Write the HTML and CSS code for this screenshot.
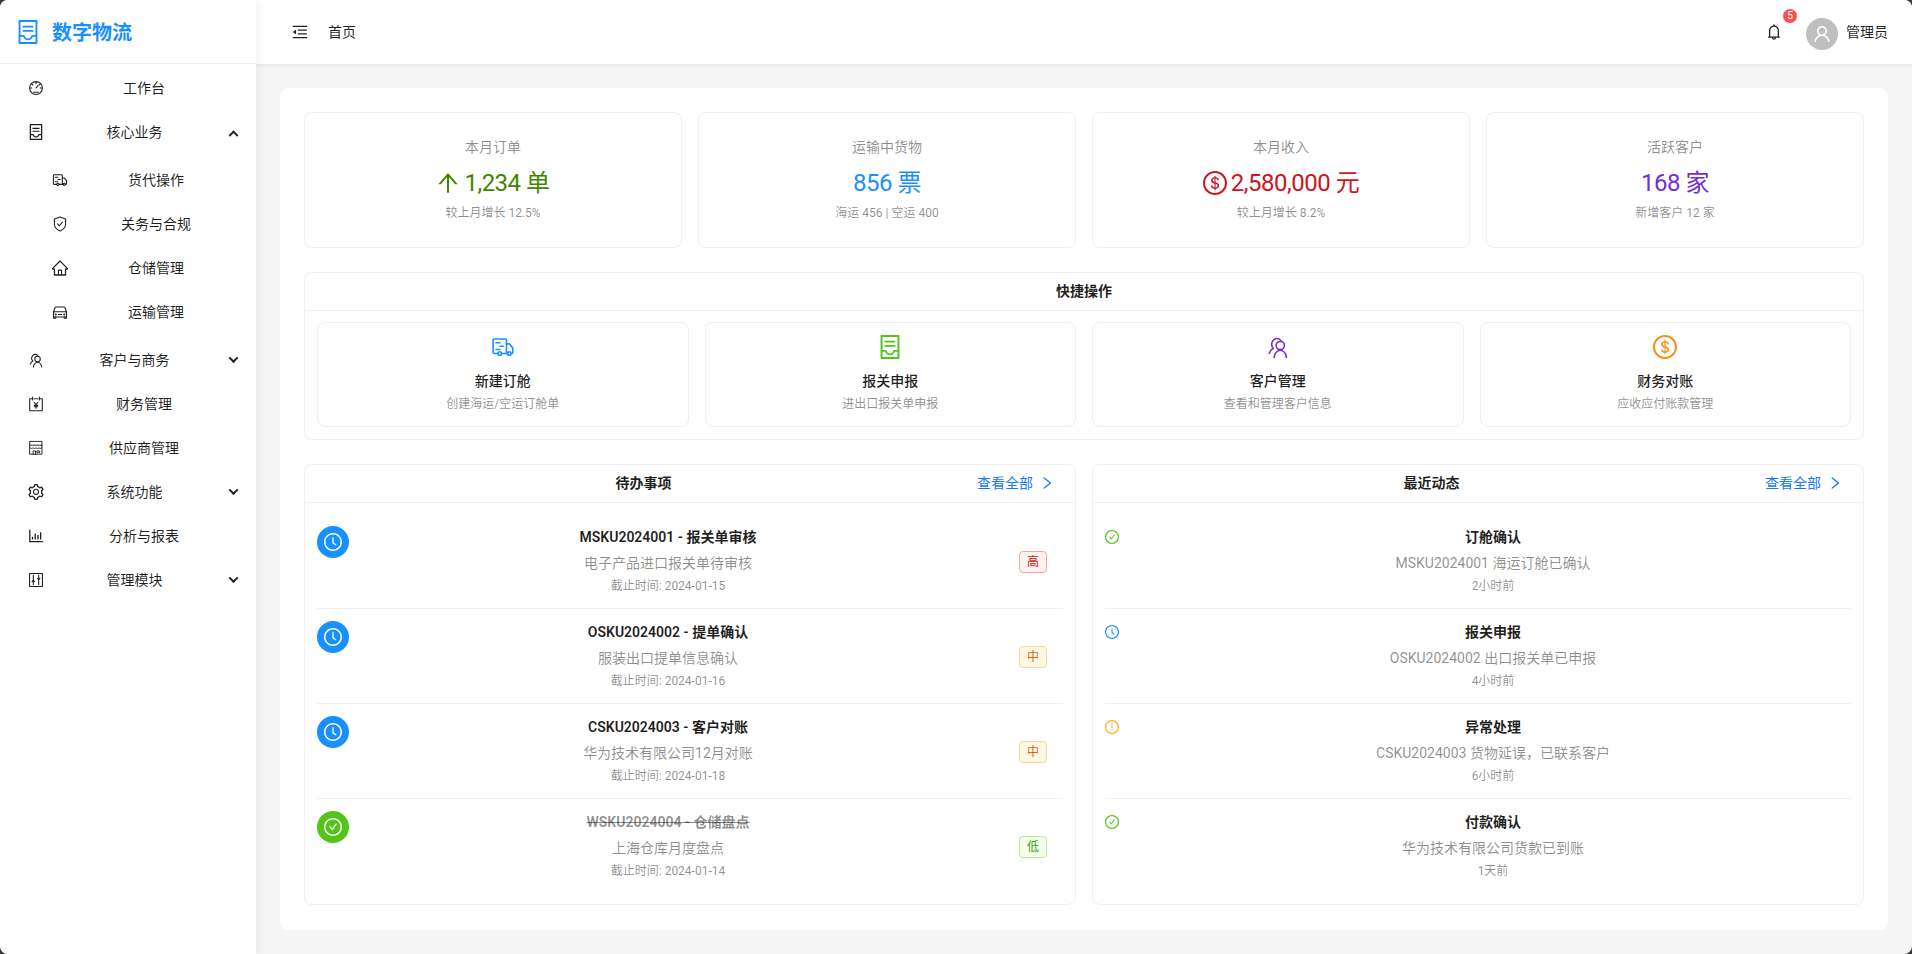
FILE: index.html
```html
<!DOCTYPE html>
<html lang="zh-CN">
<head>
<meta charset="utf-8">
<title>数字物流</title>
<link rel="stylesheet" href="styles.css">
</head>
<body>
<svg class="sprite" xmlns="http://www.w3.org/2000/svg">
  <defs>
    <symbol id="i-fold" viewBox="64 64 896 896"><path d="M408 442h480c4.4 0 8-3.6 8-8v-56c0-4.4-3.6-8-8-8H408c-4.4 0-8 3.6-8 8v56c0 4.4 3.6 8 8 8zm-8 204c0 4.4 3.6 8 8 8h480c4.4 0 8-3.6 8-8v-56c0-4.4-3.6-8-8-8H408c-4.4 0-8 3.6-8 8v56zm504-486H120c-4.4 0-8 3.6-8 8v56c0 4.4 3.6 8 8 8h784c4.4 0 8-3.6 8-8v-56c0-4.4-3.6-8-8-8zm0 632H120c-4.4 0-8 3.6-8 8v56c0 4.4 3.6 8 8 8h784c4.4 0 8-3.6 8-8v-56c0-4.4-3.6-8-8-8zM115.4 518.9L271.7 642c5.8 4.6 14.4.5 14.4-6.9V388.9c0-7.4-8.5-11.5-14.4-6.9L115.4 505.1a8.74 8.74 0 000 13.8z"/></symbol>
    <symbol id="i-clock" viewBox="64 64 896 896"><path d="M512 64C264.6 64 64 264.6 64 512s200.6 448 448 448 448-200.6 448-448S759.4 64 512 64zm0 820c-205.4 0-372-166.6-372-372s166.6-372 372-372 372 166.6 372 372-166.6 372-372 372z"/><path d="M686.7 638.6L544.1 535.5V288c0-4.4-3.6-8-8-8H488c-4.4 0-8 3.6-8 8v275.4c0 2.6 1.2 5 3.3 6.5l165.4 120.6c3.6 2.6 8.6 1.8 11.2-1.7l28.6-39c2.6-3.7 1.8-8.7-1.8-11.2z"/></symbol>
    <symbol id="i-check" viewBox="64 64 896 896"><path d="M699 353h-46.9c-10.2 0-19.9 4.9-25.9 13.3L469 584.3l-71.2-98.8c-6-8.3-15.6-13.3-25.9-13.3H325c-6.5 0-10.3 7.4-6.5 12.7l124.6 172.8a31.8 31.8 0 0051.7 0l210.6-292c3.9-5.3.1-12.7-6.4-12.7z"/><path d="M512 64C264.6 64 64 264.6 64 512s200.6 448 448 448 448-200.6 448-448S759.4 64 512 64zm0 820c-205.4 0-372-166.6-372-372s166.6-372 372-372 372 166.6 372 372-166.6 372-372 372z"/></symbol>
    <symbol id="i-warn" viewBox="64 64 896 896"><path d="M512 64C264.6 64 64 264.6 64 512s200.6 448 448 448 448-200.6 448-448S759.4 64 512 64zm0 820c-205.4 0-372-166.6-372-372s166.6-372 372-372 372 166.6 372 372-166.6 372-372 372z"/><path d="M464 688a48 48 0 1096 0 48 48 0 10-96 0zm24-112h48c4.4 0 8-3.6 8-8V296c0-4.4-3.6-8-8-8h-48c-4.4 0-8 3.6-8 8v272c0 4.4 3.6 8 8 8z"/></symbol>
    <symbol id="i-bell" viewBox="64 64 896 896"><path d="M816 768h-24V428c0-141.1-104.3-257.7-240-277.1V112c0-22.1-17.9-40-40-40s-40 17.9-40 40v38.9c-135.7 19.4-240 136-240 277.1v340h-24c-17.7 0-32 14.3-32 32v32c0 4.4 3.6 8 8 8h216c0 61.8 50.2 112 112 112s112-50.2 112-112h216c4.4 0 8-3.6 8-8v-32c0-17.7-14.3-32-32-32zM512 888c-26.5 0-48-21.5-48-48h96c0 26.5-21.5 48-48 48zM304 768V428c0-55.6 21.6-107.8 60.9-147.1S456.4 220 512 220c55.6 0 107.8 21.6 147.1 60.9S720 372.4 720 428v340H304z"/></symbol>
    <symbol id="i-user" viewBox="64 64 896 896"><path d="M858.5 763.6a374 374 0 00-80.6-119.5 375.63 375.63 0 00-119.5-80.6c-.4-.2-.8-.3-1.2-.5C719.5 518 760 444.7 760 362c0-137-111-248-248-248S264 225 264 362c0 82.7 40.5 156 102.8 201.1-.4.2-.8.3-1.2.5-44.8 18.9-85 46-119.5 80.6a375.63 375.63 0 00-80.6 119.5A371.7 371.7 0 00136 901.8a8 8 0 008 8.2h60c4.4 0 7.9-3.5 8-7.8 2-77.2 33-149.5 87.8-204.3 56.7-56.7 132-87.9 212.2-87.9s155.5 31.2 212.2 87.9C779 752.7 810 825 812 902.2c.1 4.4 3.6 7.8 8 7.8h60a8 8 0 008-8.2c-1-47.8-10.9-94.3-29.5-138.2zM512 534c-45.9 0-89.1-17.9-121.6-50.4S340 407.9 340 362c0-45.9 17.9-89.1 50.4-121.6S466.1 190 512 190s89.1 17.9 121.6 50.4S684 316.1 684 362c0 45.9-17.9 89.1-50.4 121.6S557.9 534 512 534z"/></symbol>
    <symbol id="i-dollar" viewBox="64 64 896 896"><path d="M512 64C264.6 64 64 264.6 64 512s200.6 448 448 448 448-200.6 448-448S759.4 64 512 64zm0 820c-205.4 0-372-166.6-372-372s166.6-372 372-372 372 166.6 372 372-166.6 372-372 372zm47.7-395.2l-25.4-5.9V348.6c38 5.2 61.5 29 65.5 58.2.5 4 3.9 6.9 7.9 6.9h44.9c4.7 0 8.4-4.1 8-8.8-6.1-62.3-57.4-102.3-125.9-109.2V263c0-4.4-3.6-8-8-8h-28.1c-4.4 0-8 3.6-8 8v33c-70.8 6.9-126.2 46-126.2 119 0 67.6 49.8 100.2 102.1 112.7l24.7 6.3v142.7c-44.2-5.9-69-29.5-74.1-61.3-.6-3.8-4-6.6-7.9-6.6H363c-4.7 0-8.4 4-8 8.7 4.5 55 46.2 105.6 135.2 112.1V761c0 4.4 3.6 8 8 8h28.4c4.4 0 8-3.6 8-8.1l-.2-31.7c78.3-6.9 134.3-48.8 134.3-124-.1-69.4-44.2-100.4-109-116.4zm-68.6-16.2c-5.6-1.6-10.3-3.1-15-5-33.8-12.2-49.5-31.9-49.5-57.3 0-36.3 27.5-57 64.5-61.7v124zM534.3 677V543.3c3.1.9 5.9 1.6 8.8 2.2 47.3 14.4 63.2 34.4 63.2 65.1 0 39.1-29.4 62.6-72 66.4z"/></symbol>
    <symbol id="i-arrowup" viewBox="64 64 896 896"><path d="M868 545.5L536.1 163a31.96 31.96 0 00-48.3 0L156 545.5a7.97 7.97 0 006 13.2h81c4.6 0 9-2 12.1-5.5L474 300.9V864c0 4.4 3.6 8 8 8h60c4.4 0 8-3.6 8-8V300.9l218.9 252.3c3 3.5 7.4 5.5 12.1 5.5h81c6.8 0 10.5-8 6-13.2z"/></symbol>
    <symbol id="i-right" viewBox="64 64 896 896"><path d="M765.7 486.8L314.9 134.7A7.97 7.97 0 00302 141v77.3c0 4.9 2.3 9.6 6.1 12.6l360 281.1-360 281.1c-3.9 3-6.1 7.7-6.1 12.6V883c0 6.7 7.7 10.4 12.9 6.3l450.8-352.1a31.96 31.96 0 000-50.4z"/></symbol>
    <symbol id="i-container" viewBox="64 64 896 896"><path d="M832 64H192c-17.7 0-32 14.3-32 32v832c0 17.7 14.3 32 32 32h640c17.7 0 32-14.3 32-32V96c0-17.7-14.3-32-32-32zm-40 824H232V687h97.9c11.6 32.8 32 62.3 59.2 85.2 34.5 29.1 78.3 45.1 122.9 45.1s88.4-16 122.9-45.1c27.2-22.9 47.5-52.4 59.2-85.2H792v201zm0-264H643.6l-5.2 24.7C626.4 708.5 573.2 752 512 752s-114.4-43.5-126.5-103.3l-5.2-24.7H232V136h560v488zM320 341h384c4.4 0 8-3.6 8-8v-48c0-4.4-3.6-8-8-8H320c-4.4 0-8 3.6-8 8v48c0 4.4 3.6 8 8 8zm0 160h384c4.4 0 8-3.6 8-8v-48c0-4.4-3.6-8-8-8H320c-4.4 0-8 3.6-8 8v48c0 4.4 3.6 8 8 8z"/></symbol>
    <symbol id="i-home" viewBox="64 64 896 896"><path d="M946.5 505L560.1 118.8l-25.9-25.9a31.5 31.5 0 00-44.4 0L77.5 505a63.9 63.9 0 00-18.8 46c.4 35.2 29.7 63.3 64.9 63.3h42.5V940h691.8V614.3h43.4c17.1 0 33.2-6.7 45.3-18.8a63.6 63.6 0 0018.7-45.3c0-17-6.7-33.1-18.8-45.2zM568 868H456V664h112v204zm217.9-325.7V868H632V640c0-22.1-17.9-40-40-40H432c-22.1 0-40 17.9-40 40v228H238.1V542.3h-96l370-369.7 23.1 23.1L882 542.3h-96.1z"/></symbol>
    <symbol id="i-setting" viewBox="64 64 896 896"><path d="M924.8 625.7l-65.5-56c3.1-19 4.7-38.4 4.7-57.8s-1.6-38.8-4.7-57.8l65.5-56a32.03 32.03 0 009.3-35.2l-.9-2.6a443.74 443.74 0 00-79.7-137.9l-1.8-2.1a32.12 32.12 0 00-35.1-9.5l-81.3 28.9c-30-24.6-63.5-44-99.7-57.6l-15.7-85a32.05 32.05 0 00-25.8-25.7l-2.7-.5c-52.1-9.4-106.9-9.4-159 0l-2.7.5a32.05 32.05 0 00-25.8 25.7l-15.8 85.4a351.86 351.86 0 00-99 57.4l-81.9-29.1a32 32 0 00-35.1 9.5l-1.8 2.1a446.02 446.02 0 00-79.7 137.9l-.9 2.6c-4.5 12.5-.8 26.5 9.3 35.2l66.3 56.6c-3.1 18.8-4.6 38-4.6 57.1 0 19.2 1.5 38.4 4.6 57.1L99 625.5a32.03 32.03 0 00-9.3 35.2l.9 2.6c18.1 50.4 44.9 96.9 79.7 137.9l1.8 2.1a32.12 32.12 0 0035.1 9.5l81.9-29.1c29.8 24.5 63.1 43.9 99 57.4l15.8 85.4a32.05 32.05 0 0025.8 25.7l2.7.5a449.4 449.4 0 00159 0l2.7-.5a32.05 32.05 0 0025.8-25.7l15.7-85a350 350 0 0099.7-57.6l81.3 28.9a32 32 0 0035.1-9.5l1.8-2.1c34.8-41.1 61.6-87.5 79.7-137.9l.9-2.6c4.5-12.3.8-26.3-9.3-35zM788.3 465.9c2.5 15.1 3.8 30.6 3.8 46.1s-1.3 31-3.8 46.1l-6.6 40.1 74.7 63.9a370.03 370.03 0 01-42.6 73.6L721 702.8l-31.4 25.8c-23.9 19.6-50.5 35-79.3 45.8l-38.1 14.3-17.9 97a377.5 377.5 0 01-85 0l-17.9-97.2-37.8-14.5c-28.5-10.8-55-26.2-78.7-45.7l-31.4-25.9-93.4 33.2c-17-22.9-31.2-47.6-42.6-73.6l75.5-64.5-6.5-40c-2.4-14.9-3.7-30.3-3.7-45.5 0-15.3 1.2-30.6 3.7-45.5l6.5-40-75.5-64.5c11.3-26.1 25.6-50.7 42.6-73.6l93.4 33.2 31.4-25.9c23.7-19.5 50.2-34.9 78.7-45.7l37.9-14.3 17.9-97.2c28.1-3.2 56.8-3.2 85 0l17.9 97 38.1 14.3c28.7 10.8 55.4 26.2 79.3 45.8l31.4 25.8 92.8-32.9c17 22.9 31.2 47.6 42.6 73.6L781.8 426l6.5 39.9zM512 326c-97.2 0-176 78.8-176 176s78.8 176 176 176 176-78.8 176-176-78.8-176-176-176zm79.2 255.2A111.6 111.6 0 01512 614c-29.9 0-58-11.7-79.2-32.8A111.6 111.6 0 01400 502c0-29.9 11.7-58 32.8-79.2C454 401.6 482.1 390 512 390c29.9 0 58 11.6 79.2 32.8A111.6 111.6 0 01624 502c0 29.9-11.7 58-32.8 79.2z"/></symbol>
    <symbol id="i-chart" viewBox="64 64 896 896"><path d="M888 792H200V168c0-4.4-3.6-8-8-8h-56c-4.4 0-8 3.6-8 8v688c0 4.4 3.6 8 8 8h752c4.4 0 8-3.6 8-8v-56c0-4.4-3.6-8-8-8zm-600-80h56c4.4 0 8-3.6 8-8V560c0-4.4-3.6-8-8-8h-56c-4.4 0-8 3.6-8 8v144c0 4.4 3.6 8 8 8zm152 0h56c4.4 0 8-3.6 8-8V384c0-4.4-3.6-8-8-8h-56c-4.4 0-8 3.6-8 8v320c0 4.4 3.6 8 8 8zm152 0h56c4.4 0 8-3.6 8-8V462c0-4.4-3.6-8-8-8h-56c-4.4 0-8 3.6-8 8v242c0 4.4 3.6 8 8 8zm152 0h56c4.4 0 8-3.6 8-8V304c0-4.4-3.6-8-8-8h-56c-4.4 0-8 3.6-8 8v400c0 4.4 3.6 8 8 8z"/></symbol>
    <symbol id="i-dash" viewBox="0 0 1024 1024"><g class="ln"><circle cx="512" cy="512" r="410"/><path d="M512 512L650 340"/><path d="M512 150v90M250 260l60 60M150 512h90M784 512h90M774 260l-60 60"/><path d="M360 780h304"/></g></symbol>
    <symbol id="i-truck" viewBox="0 0 1024 1024"><g class="ln"><path d="M300 790H130a40 40 0 01-40-40V210a40 40 0 0140-40h490a40 40 0 0140 40v580H450"/><path d="M660 380h130l140 170v200a40 40 0 01-40 40h-40M660 790h60"/><circle cx="375" cy="790" r="75"/><circle cx="780" cy="790" r="75"/><path d="M210 330h170M380 480h150M210 620h170"/></g></symbol>
    <symbol id="i-shield" viewBox="0 0 1024 1024"><g class="ln"><path d="M512 70l360 125v320c0 210-150 350-360 440-210-90-360-230-360-440V195z"/><path d="M360 500l115 125 195-235"/></g></symbol>
    <symbol id="i-car" viewBox="0 0 1024 1024"><g class="ln"><path d="M100 500l90-270a60 60 0 0157-40h530a60 60 0 0157 40l90 270v330H100z"/><path d="M100 500h824M110 830v80h130v-80M784 830v80h130v-80"/><path d="M400 670h224"/><circle cx="245" cy="670" r="30"/><circle cx="780" cy="670" r="30"/></g></symbol>
    <symbol id="i-team" viewBox="0 0 1024 1024"><g class="ln"><circle cx="610" cy="450" r="175"/><path d="M350 960c0-140 110-310 260-310s260 170 260 310"/><path d="M140 780c30-90 90-170 170-210-80-70-100-220-10-340 90-110 260-100 340 10"/></g></symbol>
    <symbol id="i-book" viewBox="0 0 1024 1024"><g class="ln"><path d="M300 170H110v770h804V170H724"/><path d="M300 70v190M724 70v190M420 170h184"/><path d="M390 400l122 150 122-150M512 550v230M400 600h224M400 690h224"/></g></symbol>
    <symbol id="i-shop" viewBox="0 0 1024 1024"><g class="ln thin"><path d="M130 90h764v820H130z"/><path d="M130 330h764"/><path d="M130 490c60 70 130 70 190 0 60 70 130 70 192 0 62 70 132 70 192 0 60 70 130 70 190 0"/><path d="M330 910V700h150v210M590 700h160v110H590z"/></g></symbol>
    <symbol id="i-control" viewBox="0 0 1024 1024"><g class="ln"><rect x="100" y="100" width="824" height="824"/><path d="M340 200v620M684 200v620"/><path d="M260 620l80-90 80 90M604 400l80 90 80-90"/></g></symbol>
  </defs>
</svg>

<div class="app">
  <aside class="sider">
    <div class="logo">
      <svg class="icon logo-icon"><use href="#i-container"/></svg>
      <span class="logo-text">数字物流</span>
    </div>
    <nav class="menu">
      <a class="mi"><svg class="icon"><use href="#i-dash"/></svg><span class="mi-t">工作台</span></a>
      <a class="mi has-sub"><svg class="icon"><use href="#i-container"/></svg><span class="mi-t">核心业务</span><span class="caret up"></span></a>
      <div class="sub">
        <a class="mi sm"><svg class="icon"><use href="#i-truck"/></svg><span class="mi-t">货代操作</span></a>
        <a class="mi sm"><svg class="icon"><use href="#i-shield"/></svg><span class="mi-t">关务与合规</span></a>
        <a class="mi sm"><svg class="icon"><use href="#i-home"/></svg><span class="mi-t">仓储管理</span></a>
        <a class="mi sm"><svg class="icon"><use href="#i-car"/></svg><span class="mi-t">运输管理</span></a>
      </div>
      <a class="mi has-sub"><svg class="icon"><use href="#i-team"/></svg><span class="mi-t">客户与商务</span><span class="caret"></span></a>
      <a class="mi"><svg class="icon"><use href="#i-book"/></svg><span class="mi-t">财务管理</span></a>
      <a class="mi"><svg class="icon"><use href="#i-shop"/></svg><span class="mi-t">供应商管理</span></a>
      <a class="mi has-sub"><svg class="icon"><use href="#i-setting"/></svg><span class="mi-t">系统功能</span><span class="caret"></span></a>
      <a class="mi"><svg class="icon"><use href="#i-chart"/></svg><span class="mi-t">分析与报表</span></a>
      <a class="mi has-sub"><svg class="icon"><use href="#i-control"/></svg><span class="mi-t">管理模块</span><span class="caret"></span></a>
    </nav>
  </aside>

  <div class="right">
    <header class="topbar">
      <svg class="icon fold"><use href="#i-fold"/></svg>
      <span class="crumb">首页</span>
      <span class="spacer"></span>
      <span class="bell"><svg class="icon"><use href="#i-bell"/></svg><b class="badge">5</b></span>
      <span class="avatar"><svg class="icon"><use href="#i-user"/></svg></span>
      <span class="uname">管理员</span>
    </header>

    <main class="main">
      <section class="sheet">
        <div class="stats">
          <div class="card stat"><div class="stat-t">本月订单</div><div class="stat-v green"><svg class="icon"><use href="#i-arrowup"/></svg><span>1,234 单</span></div><div class="stat-s">较上月增长 12.5%</div></div>
          <div class="card stat"><div class="stat-t">运输中货物</div><div class="stat-v blue"><span>856 票</span></div><div class="stat-s">海运 456 | 空运 400</div></div>
          <div class="card stat"><div class="stat-t">本月收入</div><div class="stat-v red"><svg class="icon"><use href="#i-dollar"/></svg><span>2,580,000 元</span></div><div class="stat-s">较上月增长 8.2%</div></div>
          <div class="card stat"><div class="stat-t">活跃客户</div><div class="stat-v purple"><span>168 家</span></div><div class="stat-s">新增客户 12 家</div></div>
        </div>

        <div class="card quick">
          <div class="head"><span class="head-t">快捷操作</span></div>
          <div class="q-body">
            <div class="card q"><svg class="icon q-i blue"><use href="#i-truck"/></svg><div class="q-t">新建订舱</div><div class="q-s">创建海运/空运订舱单</div></div>
            <div class="card q"><svg class="icon q-i lime"><use href="#i-container"/></svg><div class="q-t">报关申报</div><div class="q-s">进出口报关单申报</div></div>
            <div class="card q"><svg class="icon q-i purple"><use href="#i-team"/></svg><div class="q-t">客户管理</div><div class="q-s">查看和管理客户信息</div></div>
            <div class="card q"><svg class="icon q-i orange"><use href="#i-dollar"/></svg><div class="q-t">财务对账</div><div class="q-s">应收应付账款管理</div></div>
          </div>
        </div>

        <div class="lists">
          <div class="card list">
            <div class="head"><span class="head-t">待办事项</span><a class="more">查看全部<svg class="icon"><use href="#i-right"/></svg></a></div>
            <div class="l-body">
              <div class="row"><span class="dot bg-blue"><svg class="icon"><use href="#i-clock"/></svg></span><div class="r-c"><div class="r-t">MSKU2024001 - 报关单审核</div><div class="r-d">电子产品进口报关单待审核</div><div class="r-m">截止时间: 2024-01-15</div></div><span class="tag t-red">高</span></div>
              <div class="row"><span class="dot bg-blue"><svg class="icon"><use href="#i-clock"/></svg></span><div class="r-c"><div class="r-t">OSKU2024002 - 提单确认</div><div class="r-d">服装出口提单信息确认</div><div class="r-m">截止时间: 2024-01-16</div></div><span class="tag t-orange">中</span></div>
              <div class="row"><span class="dot bg-blue"><svg class="icon"><use href="#i-clock"/></svg></span><div class="r-c"><div class="r-t">CSKU2024003 - 客户对账</div><div class="r-d">华为技术有限公司12月对账</div><div class="r-m">截止时间: 2024-01-18</div></div><span class="tag t-orange">中</span></div>
              <div class="row"><span class="dot bg-lime"><svg class="icon"><use href="#i-check"/></svg></span><div class="r-c"><div class="r-t done">WSKU2024004 - 仓储盘点</div><div class="r-d">上海仓库月度盘点</div><div class="r-m">截止时间: 2024-01-14</div></div><span class="tag t-green">低</span></div>
            </div>
          </div>

          <div class="card list">
            <div class="head"><span class="head-t">最近动态</span><a class="more">查看全部<svg class="icon"><use href="#i-right"/></svg></a></div>
            <div class="l-body">
              <div class="row"><svg class="icon mini lime"><use href="#i-check"/></svg><div class="r-c"><div class="r-t">订舱确认</div><div class="r-d">MSKU2024001 海运订舱已确认</div><div class="r-m">2小时前</div></div></div>
              <div class="row"><svg class="icon mini blue"><use href="#i-clock"/></svg><div class="r-c"><div class="r-t">报关申报</div><div class="r-d">OSKU2024002 出口报关单已申报</div><div class="r-m">4小时前</div></div></div>
              <div class="row"><svg class="icon mini amber"><use href="#i-warn"/></svg><div class="r-c"><div class="r-t">异常处理</div><div class="r-d">CSKU2024003 货物延误，已联系客户</div><div class="r-m">6小时前</div></div></div>
              <div class="row"><svg class="icon mini lime"><use href="#i-check"/></svg><div class="r-c"><div class="r-t">付款确认</div><div class="r-d">华为技术有限公司货款已到账</div><div class="r-m">1天前</div></div></div>
            </div>
          </div>
        </div>
      </section>
    </main>
  </div>
</div>
</body>
</html>
```

FILE: styles.css
```css
* { box-sizing: border-box; }
html, body { height: 100%; margin: 0; }
body {
  background: #3a3a3a;
  font-family: Roboto, "Noto Sans CJK SC", "Noto Sans", sans-serif;
  font-size: 14px;
  line-height: 22px;
  color: rgba(0, 0, 0, .88);
  overflow: hidden;
}
.sprite { position: absolute; width: 0; height: 0; }
.icon { width: 1em; height: 1em; fill: currentColor; display: inline-block; flex: none; }
.ln { fill: none; stroke: currentColor; stroke-width: 68; stroke-linecap: round; stroke-linejoin: round; }
.ln.thin { stroke-width: 60; }

.app { display: flex; width: 1912px; height: 954px; border-radius: 8px; overflow: hidden; background: #f5f5f5; }

.sider { width: 256px; flex: none; background: #fff; box-shadow: 2px 0 8px rgba(0, 0, 0, .06); position: relative; z-index: 2; }
.logo { height: 64px; display: flex; align-items: center; padding-left: 16px; border-bottom: 1px solid #f0f0f0; }
.logo-icon { font-size: 24px; color: #1890ff; }
.logo-text { margin: 2px 0 0 12px; font-size: 20px; font-weight: 700; color: #1890ff; }
.menu { padding: 4px; }
.mi { display: flex; align-items: center; height: 40px; margin-bottom: 4px; padding-left: 24px; padding-right: 16px; font-size: 14px; color: rgba(0, 0, 0, .88); }
.mi .icon { font-size: 16px; }
.mi-t { flex: 1; margin-left: 8px; text-align: center; }
.has-sub { padding-right: 12px; }
.has-sub .mi-t { margin-left: 10px; margin-right: 12px; }
.sm { padding-left: 48px; }
.sub { padding-top: 4px; }
.sub .mi:last-child { margin-bottom: 8px; }
.caret { width: 7px; height: 7px; margin: 0 3px 2px; border-right: 2px solid #222; border-bottom: 2px solid #222; transform: rotate(45deg) translate(-1px, -1px); }
.caret.up { margin-bottom: 0; transform: rotate(225deg) translate(-2px, -2px); }

.right { flex: 1; min-width: 0; display: flex; flex-direction: column; }
.topbar { height: 64px; flex: none; display: flex; align-items: center; background: #fff; padding: 0 24px 0 36px; box-shadow: 0 1px 4px rgba(0, 0, 0, .08); position: relative; z-index: 1; }
.fold { font-size: 16px; }
.crumb { margin-left: 20px; }
.spacer { flex: 1; }
.bell { position: relative; display: flex; font-size: 16px; margin-right: 24px; margin-bottom: 1px; }
.badge { position: absolute; top: -15px; left: 17px; width: 14px; height: 14px; border-radius: 50%; background: #ff4d4f; color: #fff; font-size: 11px; font-weight: 400; line-height: 14px; text-align: center; }
.avatar { width: 32px; height: 32px; margin-top: 4px; border-radius: 50%; background: #bfbfbf; color: #fff; display: flex; align-items: center; justify-content: center; font-size: 18px; }
.uname { margin-left: 8px; }

.main { flex: 1; padding: 24px; min-height: 0; }
.sheet { height: 842px; background: #fff; border-radius: 8px; padding: 24px; display: flex; flex-direction: column; gap: 24px; }
.card { background: #fff; border: 1px solid #f0f0f0; border-radius: 8px; }

.stats { display: grid; grid-template-columns: repeat(4, 1fr); gap: 16px; }
.stat { height: 136px; padding: 23px 24px 24px; text-align: center; }
.stat-t { color: rgba(0, 0, 0, .45); }
.stat-v { display: flex; align-items: center; justify-content: center; gap: 4px; margin-top: 9px; font-size: 24px; line-height: 32px; letter-spacing: -.5px; }
.stat-s { margin-top: 4px; font-size: 12px; line-height: 20px; color: rgba(0, 0, 0, .45); }
.green { color: #3f8600; }
.blue { color: #1890ff; }
.red { color: #cf1322; }
.purple { color: #722ed1; }
.lime { color: #52c41a; }
.orange { color: #fa8c16; }
.amber { color: #faad14; }

.head { height: 38px; display: flex; align-items: center; padding: 0 24px 2px; border-bottom: 1px solid #f0f0f0; }
.head-t { flex: 1; text-align: center; font-weight: 600; }
.quick { height: 168px; }
.q-body { display: grid; grid-template-columns: repeat(4, 1fr); gap: 16px; padding: 11px 12px 0; }
.q { height: 105px; padding-top: 12px; text-align: center; }
.q-i { font-size: 24px; display: block; margin: 0 auto 11px; }
.q-t { font-weight: 500; }
.q-s { margin-top: 1px; font-size: 12px; color: rgba(0, 0, 0, .45); }

.lists { display: grid; grid-template-columns: 1fr 1fr; gap: 16px; }
.list { height: 441px; }
.more { display: flex; align-items: center; gap: 7px; margin-left: 19px; margin-right: -3px; color: #1677ff; }
.more .icon { font-size: 14px; }
.l-body { padding: 11px 12px 0; }
.row { display: flex; align-items: flex-start; height: 95px; padding-top: 12px; border-bottom: 1px solid #f0f0f0; }
.row:last-child { border-bottom: 0; }
.r-c { flex: 1; min-width: 0; text-align: center; margin-left: 16px; }
.r-t { font-weight: 600; color: rgba(0, 0, 0, .88); }
.r-t.done { text-decoration: line-through; color: rgba(0, 0, 0, .45); }
.r-d { margin-top: 4px; color: rgba(0, 0, 0, .45); }
.r-m { margin-top: 2px; font-size: 12px; line-height: 20px; color: rgba(0, 0, 0, .45); }
.dot { width: 32px; height: 32px; border-radius: 50%; display: flex; align-items: center; justify-content: center; color: #fff; font-size: 18px; flex: none; }
.bg-blue { background: #1890ff; }
.bg-lime { background: #52c41a; }
.mini { font-size: 14px; margin-top: 4px; }
.tag { width: 28px; height: 22px; flex: none; margin: 25px 16px 0 48px; border: 1px solid; border-radius: 4px; font-size: 12px; line-height: 20px; text-align: center; }
.t-red { color: #cf1322; background: #fff1f0; border-color: #ffa39e; }
.t-orange { color: #d46b08; background: #fff7e6; border-color: #ffd591; }
.t-green { color: #389e0d; background: #f6ffed; border-color: #b7eb8f; }
```
